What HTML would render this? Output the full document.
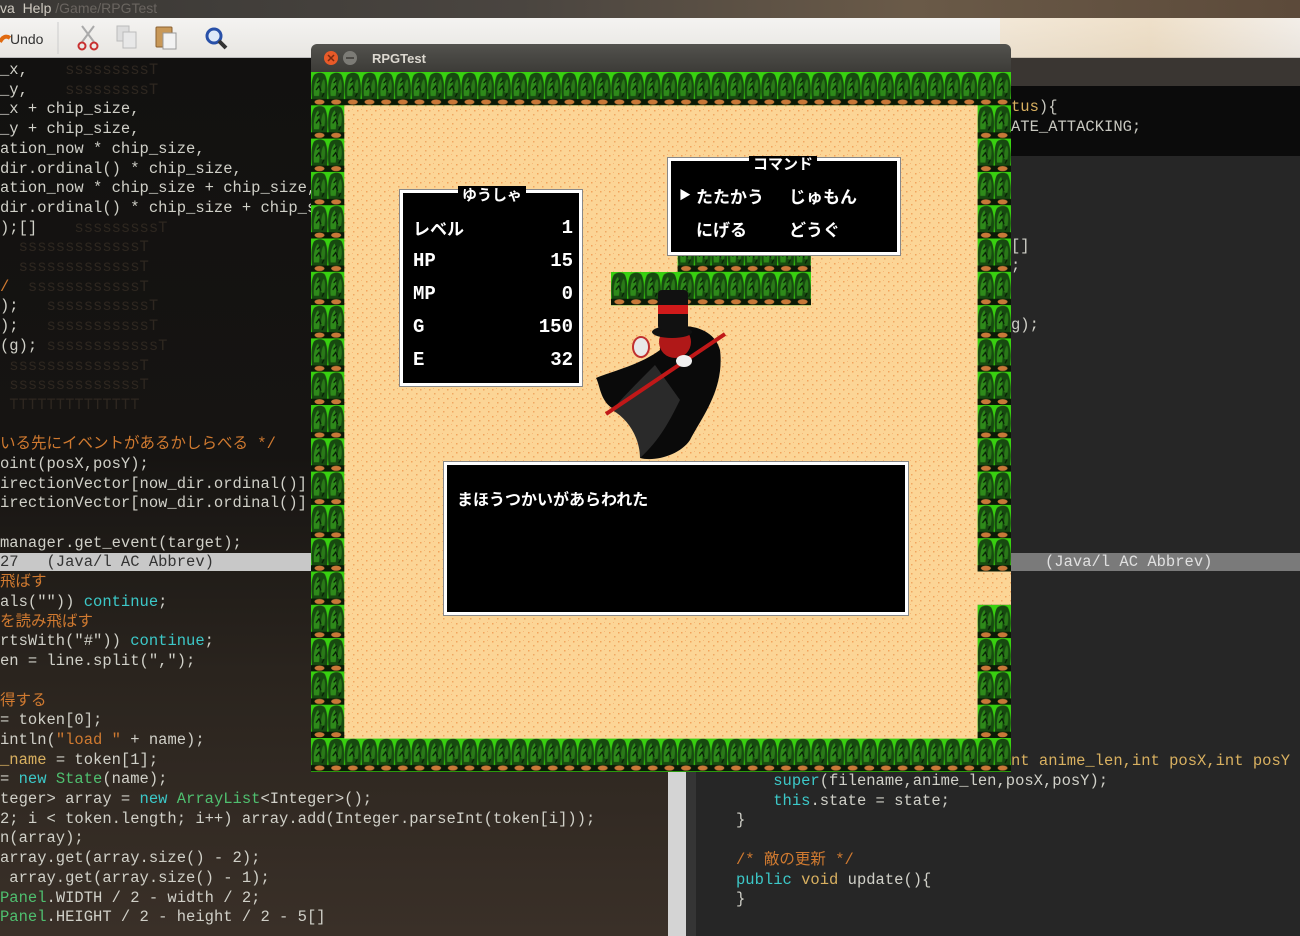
<!DOCTYPE html>
<html><head><meta charset="utf-8">
<style>
*{margin:0;padding:0;box-sizing:border-box}
body{width:1300px;height:936px;overflow:hidden;position:relative;background:#1b1816;font-family:"Liberation Mono","Noto Sans CJK JP",monospace}
.abs{position:absolute}
.code{position:absolute;font-size:15.5px;line-height:19.7px;color:#d0d0c8;white-space:pre}
.code span.k{color:#3cc8c8}.code span.o{color:#d07a30}.code span.t{color:#4fbf6f}.code span.f{color:#2e2720}.code span.y{color:#d8b060}
.ml{position:absolute;height:18px;font-size:15.5px;line-height:18px;color:#333;white-space:pre}
.box{position:absolute;background:#000;border:3px solid #fff;outline:1px solid #888;color:#fff;font-family:"Liberation Mono","Noto Sans CJK JP",monospace;font-weight:bold}
.st{position:absolute;left:10px;right:6px;font-size:19px;height:22px;line-height:22px}
.st b{position:absolute;right:0}
.jp{font-family:"Noto Sans CJK JP","WenQuanYi Zen Hei",sans-serif;font-weight:bold;font-size:17px}
</style></head><body>
<div class="abs" style="left:0;top:0;width:1300px;height:18px;background:linear-gradient(90deg,#3a3835,#4a4540 40%,#6a5a48 70%,#5c4a3a);"></div>
<div class="abs" style="left:0;top:0;font:14px 'Liberation Sans',sans-serif;color:#cfcac0;line-height:16px">va&nbsp; Help <span style="color:#6a6560">/Game/RPGTest</span></div>
<div class="abs" style="left:0;top:18px;width:1300px;height:40px;background:linear-gradient(#f4f3f1,#e8e6e2);border-bottom:1px solid #bbb"></div>
<div class="abs" style="left:1000px;top:18px;width:300px;height:40px;background:linear-gradient(90deg,rgba(240,200,140,0.25),rgba(230,190,130,0.35),rgba(240,220,200,0.2))"></div>
<svg class="abs" style="left:0;top:18px" width="260" height="40">
<path d="M0 24 Q4 16 10 20" stroke="#e06a10" stroke-width="4" fill="none"/>
<text x="10" y="26" font-family="Liberation Sans" font-size="14" fill="#333">Undo</text>
<line x1="58" y1="4" x2="58" y2="36" stroke="#ccc"/>
<g stroke="#aaa" stroke-width="2" fill="none"><line x1="82" y1="8" x2="94" y2="24"/><line x1="94" y1="8" x2="82" y2="24"/></g>
<circle cx="82" cy="28" r="3.5" stroke="#c83030" stroke-width="2" fill="none"/><circle cx="94" cy="28" r="3.5" stroke="#c83030" stroke-width="2" fill="none"/>
<rect x="117" y="8" width="12" height="15" fill="#ddd" stroke="#bbb"/><rect x="123" y="14" width="13" height="16" fill="#e8e8e8" stroke="#bbb"/>
<rect x="156" y="9" width="16" height="20" rx="1" fill="#c89858" stroke="#8a6030"/><rect x="163" y="15" width="13" height="16" fill="#f2f2f2" stroke="#999"/>
<circle cx="214" cy="18" r="7" stroke="#2850a8" stroke-width="3" fill="#dde8f8"/><line x1="219" y1="23" x2="226" y2="30" stroke="#333" stroke-width="4"/>
</svg>
<div class="abs" style="left:0;top:58px;width:668px;height:878px;background:linear-gradient(180deg,#121110 0%,#161412 45%,#2a241e 70%,#3a3028 100%)"></div>
<div class="abs" style="left:0;top:553px;width:311px;height:18px;background:#c8c8c8"></div>
<div class="ml" style="left:0;top:553px">27   (Java/l AC Abbrev)</div>
<div class="code" style="left:0;top:61px"><span>_x,</span><span class="f">    sssssssssT</span>
_y,<span class="f">    sssssssssT</span>
_x + chip_size,
_y + chip_size,
ation_now * chip_size,
dir.ordinal() * chip_size,
ation_now * chip_size + chip_size,
dir.ordinal() * chip_size + chip_s
);[]<span class="f">    sssssssssT</span>
<span class="f">  sssssssssssssT</span>
<span class="f">  sssssssssssssT</span>
<span class="o">/</span><span class="f">  ssssssssssssT</span>
);<span class="f">   sssssssssssT</span>
);<span class="f">   sssssssssssT</span>
(g);<span class="f"> ssssssssssssT</span>
<span class="f"> ssssssssssssssT</span>
<span class="f"> ssssssssssssssT</span>
<span class="f"> TTTTTTTTTTTTTT</span>

<span class="o">いる先にイベントがあるかしらべる */</span>
oint(posX,posY);
irectionVector[now_dir.ordinal()]
irectionVector[now_dir.ordinal()]

manager.get_event(target);

<span class="o">飛ばす</span>
als("")) <span class="k">continue</span>;
<span class="o">を読み飛ばす</span>
rtsWith("#")) <span class="k">continue</span>;
en = line.split(",");

<span class="o">得する</span>
= token[0];
intln(<span class="o">"load "</span> + name);
<span class="y">_name</span> = token[1];
= <span class="k">new</span> <span class="t">State</span>(name);
teger&gt; array = <span class="k">new</span> <span class="t">ArrayList</span>&lt;Integer&gt;();
2; i &lt; token.length; i++) array.add(Integer.parseInt(token[i]));
n(array);
array.get(array.size() - 2);
 array.get(array.size() - 1);
<span class="t">Panel</span>.WIDTH / 2 - width / 2;
<span class="t">Panel</span>.HEIGHT / 2 - height / 2 - 5[]</div>
<div class="abs" style="left:668px;top:58px;width:18px;height:878px;background:#d4d4d4"></div>
<div class="abs" style="left:686px;top:58px;width:10px;height:878px;background:#353535"></div>
<div class="abs" style="left:696px;top:58px;width:604px;height:878px;background:#262626"></div>
<div class="abs" style="left:696px;top:58px;width:604px;height:28px;background:#3a3632"></div>
<div class="abs" style="left:696px;top:86px;width:604px;height:70px;background:#0b0b0b"></div>
<div class="abs" style="left:696px;top:553px;width:604px;height:18px;background:#7a7a7a"></div>
<div class="ml" style="left:1045px;top:553px;color:#e0e0e0">(Java/l AC Abbrev)</div>
<div class="code" style="left:1011px;top:98px;color:#c8c8c0"><span class="y">tus</span>){
ATE_ATTACKING;</div>
<div class="code" style="left:1011px;top:237px">[]
;


g);</div>
<div class="code" style="left:1011px;top:752px"><span class="y">nt anime_len,int posX,int posY</span></div>
<div class="code" style="left:736px;top:772px">    <span class="k">super</span>(filename,anime_len,posX,posY);
    <span class="k">this</span>.state = state;
}

<span class="o">/* 敵の更新 */</span>
<span class="k">public</span> <span class="y">void</span> update(){
}</div>
<div class="abs" style="left:311px;top:44px;width:700px;height:28px;background:linear-gradient(#53524e,#3c3b37);border-radius:6px 6px 0 0"></div>
<svg class="abs" style="left:311px;top:44px" width="200" height="28">
<circle cx="20" cy="14" r="7" fill="#e85a28"/><path d="M17 11l6 6M23 11l-6 6" stroke="#7a2a10" stroke-width="1.5"/>
<circle cx="39" cy="14" r="7" fill="#7c7b76"/><line x1="35" y1="14" x2="43" y2="14" stroke="#3c3b37" stroke-width="1.5"/>
<text x="61" y="19" font-family="Liberation Sans" font-weight="bold" font-size="13" fill="#dcd8d0">RPGTest</text>
</svg>
<svg class="abs" style="left:311px;top:72px" width="700" height="700">
<defs>
<pattern id="sand" width="9" height="9" patternUnits="userSpaceOnUse">
<rect width="9" height="9" fill="#fcd596"/><rect x="1" y="2" width="1.5" height="1.5" fill="#f2a45c"/><rect x="6" y="6" width="1.5" height="1.5" fill="#f0a862"/><rect x="5" y="1" width="1" height="1" fill="#f6b878"/>
</pattern>
<pattern id="tree" width="16.66" height="33.3" patternUnits="userSpaceOnUse">
<rect width="16.66" height="33.3" fill="#38d010"/>
<path d="M1 28 C0 18 0 8 3 3 C6 0 12 0 14 3 C17 9 17 20 16 28 Z" fill="#174a10"/>
<path d="M3 24 C2 16 4 8 7 5 C9 9 9 17 8 24 Z" fill="#2e8a1a"/>
<path d="M10 20 C10 14 11 9 13 7 C15 12 14 18 13 22 Z" fill="#2a7a18"/>
<path d="M5 18 l3-4 l2 5 M6 11 l3 -3 M11 25 l2 -4" stroke="#051a04" stroke-width="1.2" fill="none"/>
<rect x="0" y="27" width="16.66" height="6.3" fill="#0a1a06"/>
<ellipse cx="8.5" cy="30" rx="5" ry="2.6" fill="#c87838"/>
</pattern>
</defs>
<rect width="700" height="700" fill="url(#sand)"/>
<rect x="0" y="0" width="700" height="33.3" fill="url(#tree)"/>
<rect x="0" y="666.6" width="700" height="33.4" fill="url(#tree)"/>
<rect x="0" y="0" width="33.3" height="700" fill="url(#tree)"/>
<rect x="666.6" y="0" width="33.4" height="499.5" fill="url(#tree)"/>
<rect x="666.6" y="532.8" width="33.4" height="167.2" fill="url(#tree)"/>
<rect x="366.6" y="183" width="133.3" height="17" fill="url(#tree)"/>
<rect x="300" y="200" width="200" height="33.3" fill="url(#tree)"/>
<g transform="translate(-311,-72)">
<path d="M660 330 C690 320 715 330 720 350 C725 390 700 420 690 440 C680 455 655 462 640 458 C645 440 630 420 612 408 C600 400 600 385 596 378 C610 372 640 365 660 350 Z" fill="#0a0a0a"/>
<path d="M655 365 C640 380 625 395 612 410 C630 420 640 440 640 458 C660 440 670 420 680 400 Z" fill="#2a2a2a"/>
<ellipse cx="675" cy="342" rx="16" ry="16" fill="#b01818"/>
<ellipse cx="672" cy="332" rx="20" ry="6" fill="#111"/>
<rect x="658" y="290" width="30" height="40" rx="4" fill="#111"/>
<rect x="658" y="305" width="30" height="9" fill="#d01a1a"/>
<line x1="606" y1="414" x2="725" y2="334" stroke="#c01818" stroke-width="4"/>
<ellipse cx="641" cy="347" rx="8" ry="10" fill="#e8e8e8" stroke="#c03030" stroke-width="2"/>
<ellipse cx="684" cy="361" rx="8" ry="6" fill="#f0f0f0"/>
</g>
</svg>
<div class="box" style="left:400px;top:190px;width:182px;height:196px">
<div class="abs jp" style="left:55px;top:-7px;width:68px;height:20px;background:#000;text-align:center;font-size:15px;line-height:18px">ゆうしゃ</div>
<div class="st jp" style="top:24px">レベル<b style="font-family:'Liberation Mono';font-size:19px">1</b></div>
<div class="st" style="top:57px">HP<b>15</b></div>
<div class="st" style="top:90px">MP<b>0</b></div>
<div class="st" style="top:123px">G<b>150</b></div>
<div class="st" style="top:156px">E<b>32</b></div>
</div>
<div class="box" style="left:668px;top:158px;width:232px;height:97px">
<div class="abs jp" style="left:78px;top:-5px;width:68px;height:18px;background:#000;text-align:center;font-size:15px;line-height:16px">コマンド</div>
<div class="abs" style="left:8px;top:25px;font-size:12px">▶</div>
<div class="abs jp" style="left:25px;top:22px">たたかう</div>
<div class="abs jp" style="left:118px;top:22px">じゅもん</div>
<div class="abs jp" style="left:25px;top:55px">にげる</div>
<div class="abs jp" style="left:118px;top:55px">どうぐ</div>
</div>
<div class="box" style="left:444px;top:462px;width:464px;height:153px">
<div class="abs jp" style="left:10px;top:21px;font-size:16px">まほうつかいがあらわれた</div>
</div>
</body></html>
